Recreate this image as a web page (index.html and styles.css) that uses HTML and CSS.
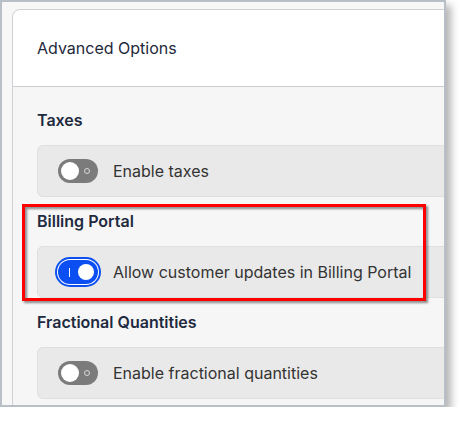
FILE: index.html
```html
<!DOCTYPE html>
<html lang="en">
<head>
  <meta charset="UTF-8" />
  <meta name="viewport" content="width=device-width, initial-scale=1.0" />
  <title>Advanced Options</title>
  <link rel="stylesheet" href="styles.css">
</head>
<body>

  <div class="frame">
    <div class="card">
      <div class="card-header">Advanced Options</div>
      <div class="card-body">

        <section class="group">
          <h3>Taxes</h3>
          <label class="option">
            <span class="toggle"><span class="knob"></span><span class="ring"></span></span>
            Enable taxes
          </label>
        </section>

        <section class="group">
          <h3>Billing Portal</h3>
          <label class="option">
            <span class="toggle on"><span class="bar"></span><span class="knob"></span></span>
            Allow customer updates in Billing Portal
          </label>
        </section>

        <section class="group">
          <h3>Fractional Quantities</h3>
          <label class="option">
            <span class="toggle"><span class="knob"></span><span class="ring"></span></span>
            Enable fractional quantities
          </label>
        </section>

      </div>
    </div>

    <!-- annotation box -->
    <div class="highlight"></div>
  </div>

</body>
</html>
```

FILE: styles.css
```css
body {
  margin: 0;
  background: #fff;
  font-family: Inter, "Noto Sans", sans-serif;
}
.frame {
  position: relative;
  box-sizing: border-box;
  width: 446px;
  height: 407px;
  padding: 7px 0 0 10px;
  border: 2px solid #b8bfc6;
  background: #f7f7f7;
  overflow: hidden;
  box-shadow: 5px 5px 8px rgba(0,0,0,0.3);
}
.card {
  width: 520px;
  min-height: 480px;
  border: 1px solid #cfd0d5;
  border-radius: 8px 8px 0 0;
  background: #f6f6f6;
}
.card-header {
  display: flex;
  align-items: center;
  height: 76px;
  padding: 0 24px;
  background: #fff;
  border-bottom: 1px solid #cbcbd2;
  border-radius: 8px 8px 0 0;
  font-size: 16px;
  font-weight: 400;
  color: #1e293b;
}
.card-body {
  padding: 23px 24px 0 24px;
}
.group + .group {
  margin-top: 14px;
}
h3 {
  margin: 0 0 15px;
  font-size: 16px;
  line-height: 20px;
  font-weight: 600;
  color: #1e2a3f;
}
.option {
  display: flex;
  align-items: center;
  gap: 15px;
  height: 50px;
  padding: 0 20px;
  border: 1px solid #dfdfdf;
  border-radius: 6px;
  background: #e9e9e9;
  font-size: 16px;
  color: #333;
}
.toggle {
  display: flex;
  align-items: center;
  justify-content: space-between;
  flex-shrink: 0;
  box-sizing: border-box;
  width: 40px;
  height: 24px;
  padding: 0 3px;
  border-radius: 12px;
  background: #7b7b7b;
}
.knob {
  width: 18px;
  height: 18px;
  border-radius: 50%;
  background: #fff;
}
.ring {
  width: 4px;
  height: 4px;
  margin-right: 5px;
  border: 1.5px solid #d8d8d8;
  border-radius: 50%;
}
.toggle.on {
  background: #0b4ff2;
  box-shadow: 0 0 0 1px #fff, 0 0 0 3px #0b4ff2;
}
.toggle.on .knob {
  width: 16px;
  height: 16px;
  margin-right: 1px;
}
.bar {
  width: 1px;
  height: 9px;
  margin-left: 8px;
  background: #fff;
}
.highlight {
  position: absolute;
  left: 20px;
  top: 202px;
  box-sizing: border-box;
  width: 404px;
  height: 97px;
  border: 3px solid #f00;
  filter: drop-shadow(2px 2px 1px rgba(0,0,0,0.45));
}
```
